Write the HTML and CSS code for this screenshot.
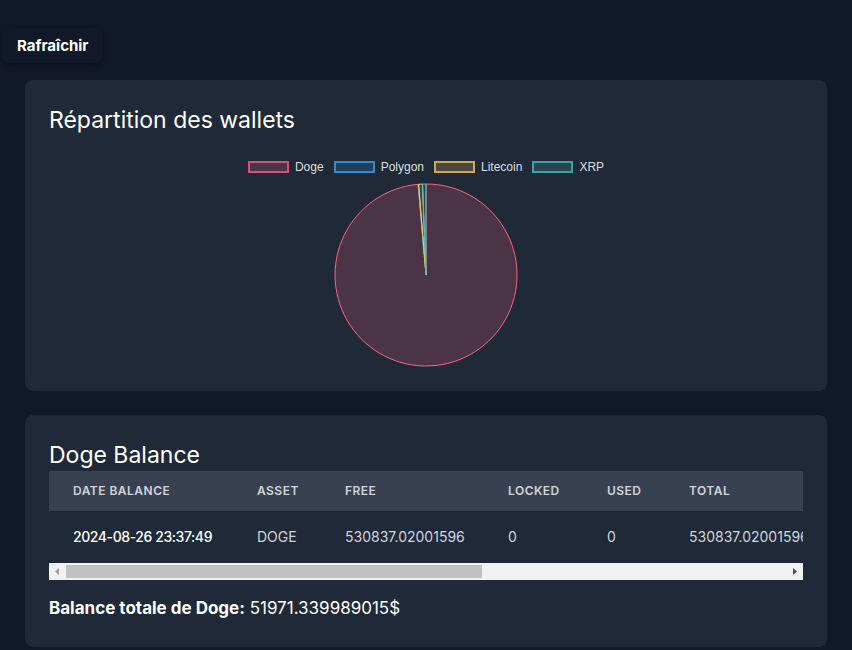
FILE: index.html
```html
<!DOCTYPE html>
<html lang="fr">
<head>
<meta charset="utf-8">
<title>Wallets</title>
<link rel="stylesheet" href="styles.css">
</head>
<body>
<div class="topbar">
  <button class="refresh">Rafraîchir</button>
</div>
<main class="main">
  <section class="card">
    <h2 class="card-title">Répartition des wallets</h2>
    <div class="chart">
      <div class="legend">
        <div class="legend-item"><span class="swatch sw-doge"></span><span>Doge</span></div>
        <div class="legend-item"><span class="swatch sw-polygon"></span><span>Polygon</span></div>
        <div class="legend-item"><span class="swatch sw-litecoin"></span><span>Litecoin</span></div>
        <div class="legend-item"><span class="swatch sw-xrp"></span><span>XRP</span></div>
      </div>
      <svg class="pie" width="184" height="184" viewBox="334 183 184 184">
        <path class="slice-doge" d="M426,275 L426,184 A91,91 0 1 1 418.07,184.35 Z"/>
        <path class="slice-polygon" d="M426,275 L418.07,184.35 A91,91 0 0 1 418.54,184.30 Z"/>
        <path class="slice-litecoin" d="M426,275 L418.54,184.30 A91,91 0 0 1 422.51,184.07 Z"/>
        <path class="slice-xrp" d="M426,275 L422.51,184.07 A91,91 0 0 1 426,184 Z"/>
      </svg>
    </div>
  </section>

  <section class="card">
    <h2 class="card-title">Doge Balance</h2>
    <div class="table-wrap">
      <table class="balance-table">
        <colgroup>
          <col class="c-date"><col class="c-asset"><col class="c-free"><col class="c-locked"><col class="c-used"><col class="c-total">
        </colgroup>
        <thead>
          <tr>
            <th>Date Balance</th>
            <th>Asset</th>
            <th>Free</th>
            <th>Locked</th>
            <th>Used</th>
            <th>Total</th>
          </tr>
        </thead>
        <tbody>
          <tr>
            <td class="date">2024-08-26 23:37:49</td>
            <td>DOGE</td>
            <td>530837.02001596</td>
            <td>0</td>
            <td>0</td>
            <td>530837.02001596</td>
          </tr>
        </tbody>
      </table>
    </div>
    <div class="hscroll" aria-hidden="true">
      <span class="hs-btn">
        <svg width="17" height="17" viewBox="0 0 17 17"><path d="M6 8.5 L10 5 L10 12 Z" fill="#a3a3a3"/></svg>
      </span>
      <span class="hs-track"><span class="hs-thumb"></span></span>
      <span class="hs-btn">
        <svg width="17" height="17" viewBox="0 0 17 17"><path d="M11 8.5 L7 5 L7 12 Z" fill="#505050"/></svg>
      </span>
    </div>
    <p class="total"><strong>Balance totale de Doge:</strong> 51971.339989015$</p>
  </section>
</main>
</body>
</html>
```

FILE: styles.css
```css
* { box-sizing: border-box; }

html, body {
  margin: 0;
  background: #111827;
  color: #ffffff;
  font-family: Inter, "Noto Sans", sans-serif;
}

.topbar {
  padding: 28px 0 0 2px;
}

.refresh {
  display: block;
  background: #111827;
  color: #ffffff;
  border: none;
  border-radius: 8px;
  padding: 0 15px;
  height: 35px;
  font-family: Inter, sans-serif;
  font-weight: 700;
  font-size: 15px;
  box-shadow: 0 2px 6px rgba(0, 0, 0, 0.35);
}

.main {
  padding: 17px 25px 0 25px;
  display: flex;
  flex-direction: column;
  gap: 24px;
}

.card {
  background: #1f2937;
  border-radius: 8px;
  padding: 24px;
}

.card-title {
  margin: 0;
  font-size: 23px;
  line-height: 32px;
  font-weight: 400;
  color: #ffffff;
}

.chart {
  padding-top: 25px;
  display: flex;
  flex-direction: column;
  align-items: center;
}

.legend {
  display: flex;
  gap: 10px;
  height: 12px;
  align-items: center;
  font-family: "Liberation Sans", Arial, sans-serif;
  font-size: 12px;
  color: #dedede;
}

.legend-item {
  display: flex;
  align-items: center;
  gap: 6px;
}

.swatch {
  display: inline-block;
  width: 41px;
  height: 12px;
  border: 2px solid;
}

.sw-doge { border-color: rgb(205, 85, 120); background: rgba(255, 99, 132, 0.2); }
.sw-polygon { border-color: rgb(50, 140, 205); background: rgba(54, 162, 235, 0.2); }
.sw-litecoin { border-color: rgb(205, 170, 80); background: rgba(255, 205, 86, 0.2); }
.sw-xrp { border-color: rgb(65, 160, 165); background: rgba(75, 192, 192, 0.2); }

.pie {
  display: block;
  margin-top: 10px;
}

.slice-doge { fill: rgba(255, 99, 132, 0.2); stroke: rgb(255, 99, 132); stroke-width: 1; }
.slice-polygon { fill: rgba(54, 162, 235, 0.2); stroke: rgb(54, 162, 235); stroke-width: 1; }
.slice-litecoin { fill: rgba(255, 205, 86, 0.2); stroke: rgb(255, 205, 86); stroke-width: 1; }
.slice-xrp { fill: rgba(75, 192, 192, 0.2); stroke: rgb(75, 192, 192); stroke-width: 1; }

.table-wrap {
  overflow: hidden;
}

.hscroll {
  display: flex;
  height: 17px;
  background: #f1f1f1;
}

.hs-btn {
  flex: 0 0 17px;
  display: block;
}

.hs-btn svg { display: block; }

.hs-track {
  flex: 1 1 auto;
  display: flex;
  padding: 2px 0;
}

.hs-thumb {
  display: block;
  width: 416px;
  background: #c1c1c1;
}

.balance-table {
  width: 1305px;
  table-layout: fixed;
  border-collapse: collapse;
}

.c-date { width: 184px; }
.c-asset { width: 88px; }
.c-free { width: 163px; }
.c-locked { width: 99px; }
.c-used { width: 82px; }

.balance-table th {
  background: #374151;
  text-align: left;
  padding: 12px 24px;
  font-size: 12px;
  line-height: 16px;
  font-weight: 600;
  letter-spacing: 0.04em;
  text-transform: uppercase;
  color: #d1d5db;
  white-space: nowrap;
}

.balance-table td {
  padding: 16px 24px;
  font-size: 14px;
  line-height: 20px;
  color: #d1d5db;
  white-space: nowrap;
}

.balance-table td.date {
  color: #ffffff;
  font-weight: 500;
  letter-spacing: -0.03em;
}

.total {
  margin: 16px 0 3px 0;
  font-size: 17px;
  line-height: 24px;
  color: #ffffff;
}

.total strong { font-weight: 700; }
```
